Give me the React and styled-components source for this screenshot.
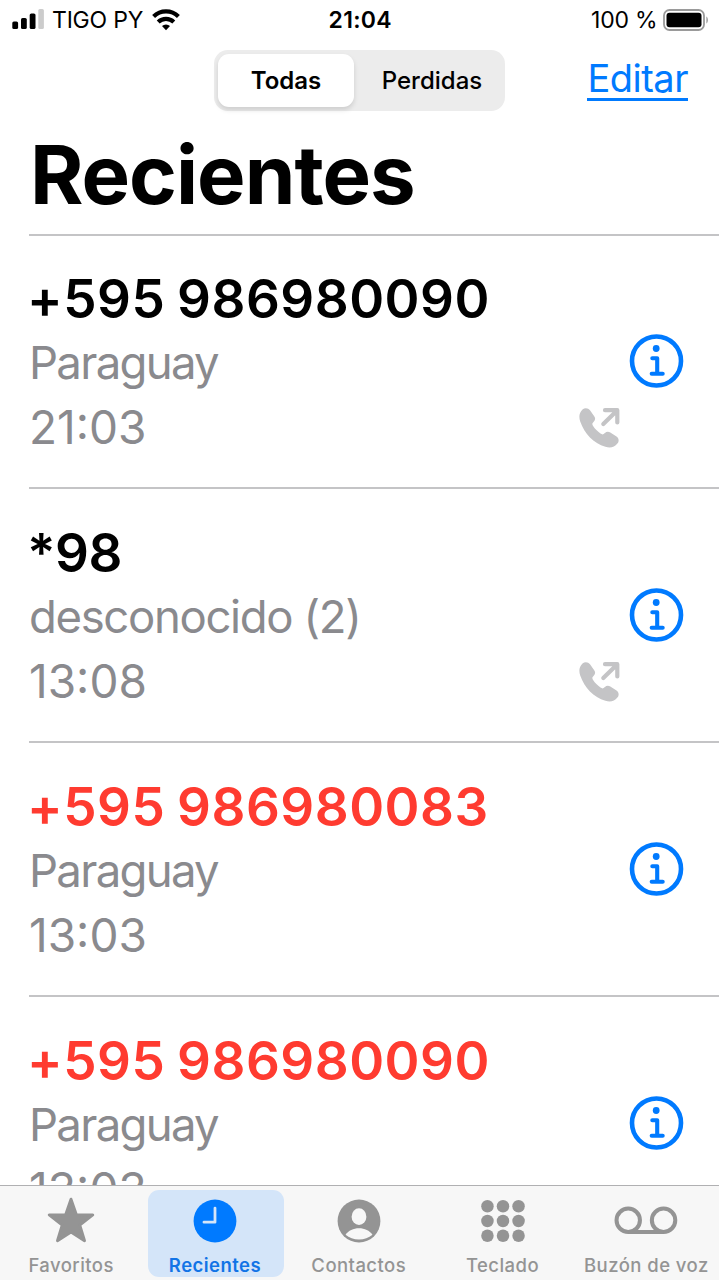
import React from 'react';
import styled, { createGlobalStyle } from 'styled-components';

const GlobalStyle = createGlobalStyle`
    * {
        box-sizing: border-box;
    }

    body {
        margin: 0;
        background-color: white;
        font-family: Inter, "Liberation Sans", sans-serif;
    }
`;

const Screen = styled.div`
    display: flex;
    flex-direction: column;
    width: 719px;
    height: 1280px;
    overflow: hidden;
    color: black;
    background-color: white;
`;

const StatusBar = styled.header`
    display: grid;
    grid-template-columns: 1fr auto 1fr;
    align-items: center;
    height: 40px;
    padding: 0 10.5px 0 12px;
    font-size: 23px;
    line-height: 40px;
    white-space: nowrap;
`;

const StatusGroup = styled.div`
    display: flex;
    align-items: center;
    justify-content: ${({ $end }) => ($end ? 'flex-end' : 'flex-start')};
`;

const Carrier = styled.span`
    margin: 0 9px 0 7px;
    letter-spacing: -0.2px;
`;

const Clock = styled.span`
    font-weight: 600;
    letter-spacing: 0.3px;
`;

const Percent = styled.span`
    margin-right: 5px;
    letter-spacing: -0.2px;
`;

const NavBar = styled.nav`
    display: grid;
    grid-template-columns: 1fr 291px 1fr;
    align-items: start;
    height: 85px;
    padding-top: 10px;
`;

const Segments = styled.div`
    grid-column: 2;
    display: flex;
    height: 61px;
    padding: 4px;
    border-radius: 14px;
    background-color: #ececec;
`;

const Segment = styled.button`
    width: ${({ $active }) => ($active ? '136px' : '147px')};
    padding: ${({ $active }) => ($active ? '0' : '0 0 0 9px')};
    border: none;
    border-radius: 11px;
    background-color: ${({ $active }) => ($active ? 'white' : 'transparent')};
    box-shadow: ${({ $active }) => ($active ? '0 3px 5px rgba(0, 0, 0, 0.13)' : 'none')};
    color: black;
    font-family: inherit;
    font-size: 24px;
    font-weight: ${({ $active }) => ($active ? 600 : 500)};
`;

const EditLink = styled.a`
    justify-self: end;
    margin: 9px 31px 0 0;
    border-bottom: 3px solid #007aff;
    color: #007aff;
    font-size: 38px;
    line-height: 39px;
    letter-spacing: -0.5px;
`;

const Title = styled.h1`
    height: 109px;
    margin: 0;
    padding: 1px 0 0 30px;
    font-size: 81.5px;
    font-weight: 700;
    line-height: 98px;
    letter-spacing: -1px;
`;

const CallList = styled.ul`
    flex: 1;
    min-height: 0;
    margin: 0;
    padding: 0 0 0 29px;
    overflow: hidden;
    list-style: none;
`;

const Call = styled.li`
    display: flex;
    height: 254.2px;
    padding-top: 30px;
    border-top: 2px solid #c4c4c6;

    &:first-child {
        height: 253px;
        padding-top: 29px;
    }
`;

const CallText = styled.div`
    flex: 1;
    white-space: nowrap;
`;

const Number = styled.div`
    height: 65px;
    margin-left: -2px;
    padding-top: 2px;
    color: ${({ $missed }) => ($missed ? '#ff3b30' : 'black')};
    font-size: 53px;
    font-weight: 600;
    line-height: 64px;
    letter-spacing: ${({ $short }) => ($short ? '-0.5px' : '0.5px')};
    word-spacing: -2px;
`;

const Detail = styled.div`
    color: #8a8a8e;
    font-size: 46px;
    line-height: 65px;
`;

const Place = styled(Detail)`
    font-size: 45.5px;
    letter-spacing: ${({ $long }) => ($long ? '-1.35px' : '-1.7px')};
`;

const DirectionSlot = styled.div`
    display: flex;
    width: 42px;
    margin: 142px 8px 0 0;
`;

const InfoSlot = styled.div`
    width: 56px;
    margin: 68px 34px 0 0;
`;

const TabBar = styled.footer`
    display: grid;
    grid-template-columns: repeat(5, 1fr);
    height: 95px;
    padding-top: 4px;
    border-top: 1px solid #b0b0b2;
    background-color: #f7f7f7;
`;

const Tab = styled.div`
    display: flex;
    flex-direction: column;
    align-items: center;
    justify-self: center;
    width: 136px;
    height: 87px;
    padding: 7px 1.5px 0 0;
    border-radius: 11px;
    background-color: ${({ $active }) => ($active ? '#d4e5f9' : 'transparent')};
    color: ${({ $active }) => ($active ? '#007aff' : '#949494')};
`;

const TabLabel = styled.span`
    margin-top: 8px;
    color: ${({ $active }) => ($active ? '#1274e6' : '#949494')};
    font-size: 18.5px;
    font-weight: ${({ $active }) => ($active ? 600 : 500)};
    line-height: 24px;
    letter-spacing: 0.45px;
    white-space: nowrap;
`;

const SignalIcon = () => (
    <svg width="33" height="22" viewBox="0 0 33 22">
        <rect x="0.3" y="12.5" width="5.8" height="7.5" rx="1.6" />
        <rect x="9" y="9" width="5.8" height="11" rx="1.6" />
        <rect x="17.7" y="4.5" width="5.8" height="15.5" rx="1.6" />
        <rect x="26.3" y="0" width="5.6" height="20" rx="1.6" fill="#cccccc" />
    </svg>
);

const WifiIcon = () => (
    <svg width="28" height="22" viewBox="0 0 28 22">
        <g fill="none" stroke="black" strokeWidth="4.2">
            <path d="M1.6 7.5a17.8 17.8 0 0 1 24.8 0" />
            <path d="M6.2 12.9a11.3 11.3 0 0 1 15.6 0" />
        </g>
        <path d="M14 21.2l-4-4.2a5.8 5.8 0 0 1 8 0z" />
    </svg>
);

const BatteryIcon = () => (
    <svg width="46" height="22" viewBox="0 0 46 22">
        <rect x="1" y="1" width="40" height="20" rx="5.5" fill="none" stroke="#9a9a9a" strokeWidth="1.8" />
        <rect x="3.5" y="3.7" width="35" height="14.6" rx="3" />
        <path d="M43.4 7.5c2 1.2 2 5.8 0 7z" fill="#9a9a9a" />
    </svg>
);

const InfoIcon = () => (
    <svg width="56" height="56" viewBox="0 0 56 56" fill="none" stroke="#007aff">
        <circle cx="27.5" cy="28" r="24.5" strokeWidth="4.6" />
        <circle cx="27.2" cy="15.5" r="3.4" fill="#007aff" stroke="none" />
        <path d="M23.3 25.2h4.9v15.5M22.7 40.7h11" strokeWidth="4.1" strokeLinecap="round" strokeLinejoin="round" />
    </svg>
);

const OutgoingIcon = () => (
    <svg width="42" height="42" viewBox="0 0 42 42">
        <path
            d="M3.5 2.5C5.8.5 9.2.8 11 3.3l4.2 5.9c1.4 2 1.2 3.9-.5 5.6-1.7 1.7-1.7 2.5-.6 4.3 2 3 4.3 5.3 7.4 7.5 1.8 1.200 2.700 1.100 4.400-.6 1.600-1.600 3.500-1.800 5.400-.5l6.200 4.100c2.500 1.700 2.800 4.700.9 7-3 3.700-7.200 5-12 3.200C14.500 36.200 5.500 26.800 1.300 14.800-.3 10.200 0 5.800 3.500 2.500z"
            fill="#c4c4c6"
        />
        <path d="M26 3.2h12.3v12.2M37.6 3.9L24.3 17" fill="none" stroke="#c4c4c6" strokeWidth="4.2" strokeLinecap="round" strokeLinejoin="round" />
    </svg>
);

const StarIcon = () => (
    <svg width="52" height="50" viewBox="0 0 52 50">
        <path
            d="M26 2.2l5.6 16.200 17.100.3-13.600 10.500 5 16.300L26 36.400 11.900 45.500l5-16.300L3.300 18.700l17.100-.3z"
            fill="currentColor"
            stroke="currentColor"
            strokeWidth="3"
            strokeLinejoin="round"
        />
    </svg>
);

const ClockIcon = () => (
    <svg width="50" height="50" viewBox="0 0 50 50">
        <circle cx="25" cy="25" r="22.3" fill="currentColor" />
        <path d="M25 11.5v14.7H13.5" fill="none" stroke="#d4e5f9" strokeWidth="2.9" strokeLinecap="round" strokeLinejoin="round" />
    </svg>
);

const ContactIcon = () => (
    <svg width="50" height="50" viewBox="0 0 50 50">
        <circle cx="25" cy="25" r="22.3" fill="currentColor" />
        <ellipse cx="25" cy="20.5" rx="7.7" ry="8.7" fill="#f7f7f7" />
        <path d="M11 39.2c3-4.400 8.200-6.700 14-6.700s11 2.300 14 6.700c-3.800 3.300-8.600 5-14 5s-10.200-1.700-14-5z" fill="#f7f7f7" />
    </svg>
);

const KeypadIcon = () => (
    <svg width="50" height="50" viewBox="0 0 50 50" fill="currentColor">
        {[9.6, 25, 40.4].map((y) =>
            [8.8, 25, 41.2].map((x) => <circle key={`${x}-${y}`} cx={x} cy={y} r="6.5" />)
        )}
    </svg>
);

const VoicemailIcon = () => (
    <svg width="66" height="50" viewBox="0 0 66 50" fill="none" stroke="currentColor" strokeWidth="4.2">
        <circle cx="14.5" cy="24.2" r="12.2" />
        <circle cx="51.3" cy="24.2" r="12.2" />
        <path d="M14.5 36.4h36.8" />
    </svg>
);

const calls = [
    { number: '+595 986980090', place: 'Paraguay', time: '21:03', outgoing: true },
    { number: '*98', place: 'desconocido (2)', time: '13:08', outgoing: true, unknown: true },
    { number: '+595 986980083', place: 'Paraguay', time: '13:03', missed: true },
    { number: '+595 986980090', place: 'Paraguay', time: '13:03', missed: true }
];

const tabs = [
    { label: 'Favoritos', Icon: StarIcon },
    { label: 'Recientes', Icon: ClockIcon, active: true },
    { label: 'Contactos', Icon: ContactIcon },
    { label: 'Teclado', Icon: KeypadIcon },
    { label: 'Buzón de voz', Icon: VoicemailIcon }
];

const App = () => {

  return (
    <Screen>
        <GlobalStyle />
        <StatusBar>
            <StatusGroup>
                <SignalIcon />
                <Carrier>TIGO PY</Carrier>
                <WifiIcon />
            </StatusGroup>
            <Clock>21:04</Clock>
            <StatusGroup $end>
                <Percent>100 %</Percent>
                <BatteryIcon />
            </StatusGroup>
        </StatusBar>
        <NavBar>
            <Segments>
                <Segment $active>Todas</Segment>
                <Segment>Perdidas</Segment>
            </Segments>
            <EditLink>Editar</EditLink>
        </NavBar>
        <Title>Recientes</Title>
        <CallList>
            {calls.map((call, index) => (
                <Call key={index}>
                    <CallText>
                        <Number $missed={call.missed} $short={call.unknown}>{call.number}</Number>
                        <Place $long={call.unknown}>{call.place}</Place>
                        <Detail>{call.time}</Detail>
                    </CallText>
                    <DirectionSlot>{call.outgoing && <OutgoingIcon />}</DirectionSlot>
                    <InfoSlot>
                        <InfoIcon />
                    </InfoSlot>
                </Call>
            ))}
        </CallList>
        <TabBar>
            {tabs.map(({ label, Icon, active }) => (
                <Tab key={label} $active={active}>
                    <Icon />
                    <TabLabel $active={active}>{label}</TabLabel>
                </Tab>
            ))}
        </TabBar>
    </Screen>
  );
};

export default App;
